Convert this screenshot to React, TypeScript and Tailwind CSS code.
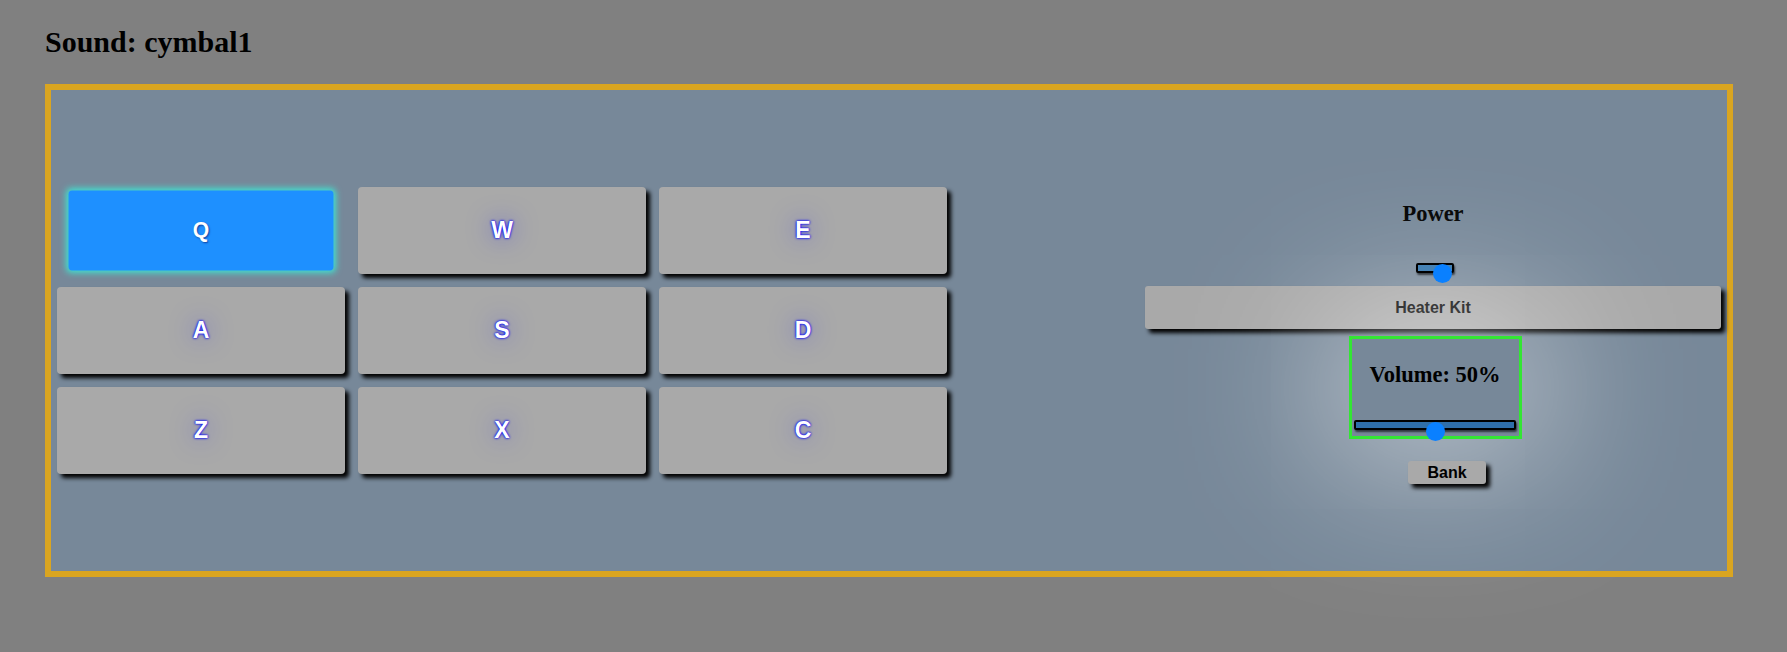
const pads = ['Q', 'W', 'E', 'A', 'S', 'D', 'Z', 'X', 'C'];

interface DrumPadProps {
  label: string;
  active?: boolean;
}

function DrumPad({ label, active }: DrumPadProps) {
  return (
    <button
      className={
        active
          ? "rounded-[4px] bg-[#1e90ff] scale-[0.92] shadow-[0_0_7px_2px_#40e0d0] flex items-center justify-center text-white text-[23px] font-bold font-['Liberation_Sans',Arial,sans-serif] [text-shadow:1px_1px_2px_#1040a0]"
          : "rounded-[4px] bg-[#a9a9a9] shadow-[4px_4px_4px_#000] flex items-center justify-center text-white text-[23px] font-bold font-['Liberation_Sans',Arial,sans-serif] [text-shadow:0_0_2px_#00f,0_0_3px_#00f,0_0_24px_rgba(0,0,255,0.5)]"
      }
    >
      {label}
    </button>
  );
}

export default function App() {
  return (
    <div className="min-h-screen bg-[#808080] pl-[45px] pt-[25px] font-['Liberation_Serif','Times_New_Roman',serif]">
      <h1 className="text-[30px] font-bold leading-[33px] text-black mb-[26px]">Sound: cymbal1</h1>

      <div className="w-[1688px] h-[493px] border-[6px] border-[#daa520] bg-[#778899] flex justify-between items-center px-[6px]">
        <div className="grid grid-cols-[repeat(3,288px)] auto-rows-[87px] gap-[13px]">
          {pads.map((k) => (
            <DrumPad key={k} label={k} active={k === 'Q'} />
          ))}
        </div>

        <div className="self-start pt-[111px] w-[576px] flex flex-col items-center">
          <p className="text-[22.5px] font-bold leading-[25px] text-black">Power</p>

          {/* power switch */}
          <div className="mt-[37px] relative w-[38px] h-[10px] border-2 border-black rounded-[2px] bg-[#4682b4] shadow-[1px_2px_2px_rgba(0,0,0,0.6)] ml-[4px]">
            <div className="absolute left-[15px] top-[-1px] w-[19px] h-[19px] rounded-full bg-[#0a80ff]" />
          </div>

          <div className="mt-[13px] w-full h-[43px] rounded-[3px] bg-[#a9a9a9] shadow-[4px_4px_4px_#000] flex items-center justify-center text-black text-[16px] font-bold font-['Liberation_Sans',Arial,sans-serif]">
            Heater Kit
          </div>

          <div className="mt-[7px] ml-[4px] w-[173px] h-[103px] border-[3px] border-[#33e633] bg-[#778899] shadow-[0_0_150px_25px_rgba(255,255,255,0.55)] flex flex-col items-center pt-[23px]">
            <p className="text-[22.5px] font-bold leading-[25px] text-black">Volume: 50%</p>
            <div className="mt-[33px] self-start ml-[2px] relative w-[162px] h-[10px] border-2 border-black rounded-[2px] bg-[#2f6ea9] shadow-[1px_2px_2px_rgba(0,0,0,0.6)]">
              <div className="absolute left-[70px] top-0 w-[19px] h-[19px] rounded-full bg-[#0a80ff]" />
            </div>
          </div>

          <button className="mt-[22px] ml-[28px] w-[78px] h-[23px] rounded-[3px] bg-[#a9a9a9] shadow-[4px_4px_4px_#000] text-black text-[16px] font-bold font-['Liberation_Sans',Arial,sans-serif] leading-none">
            Bank
          </button>
        </div>
      </div>
    </div>
  );
}
